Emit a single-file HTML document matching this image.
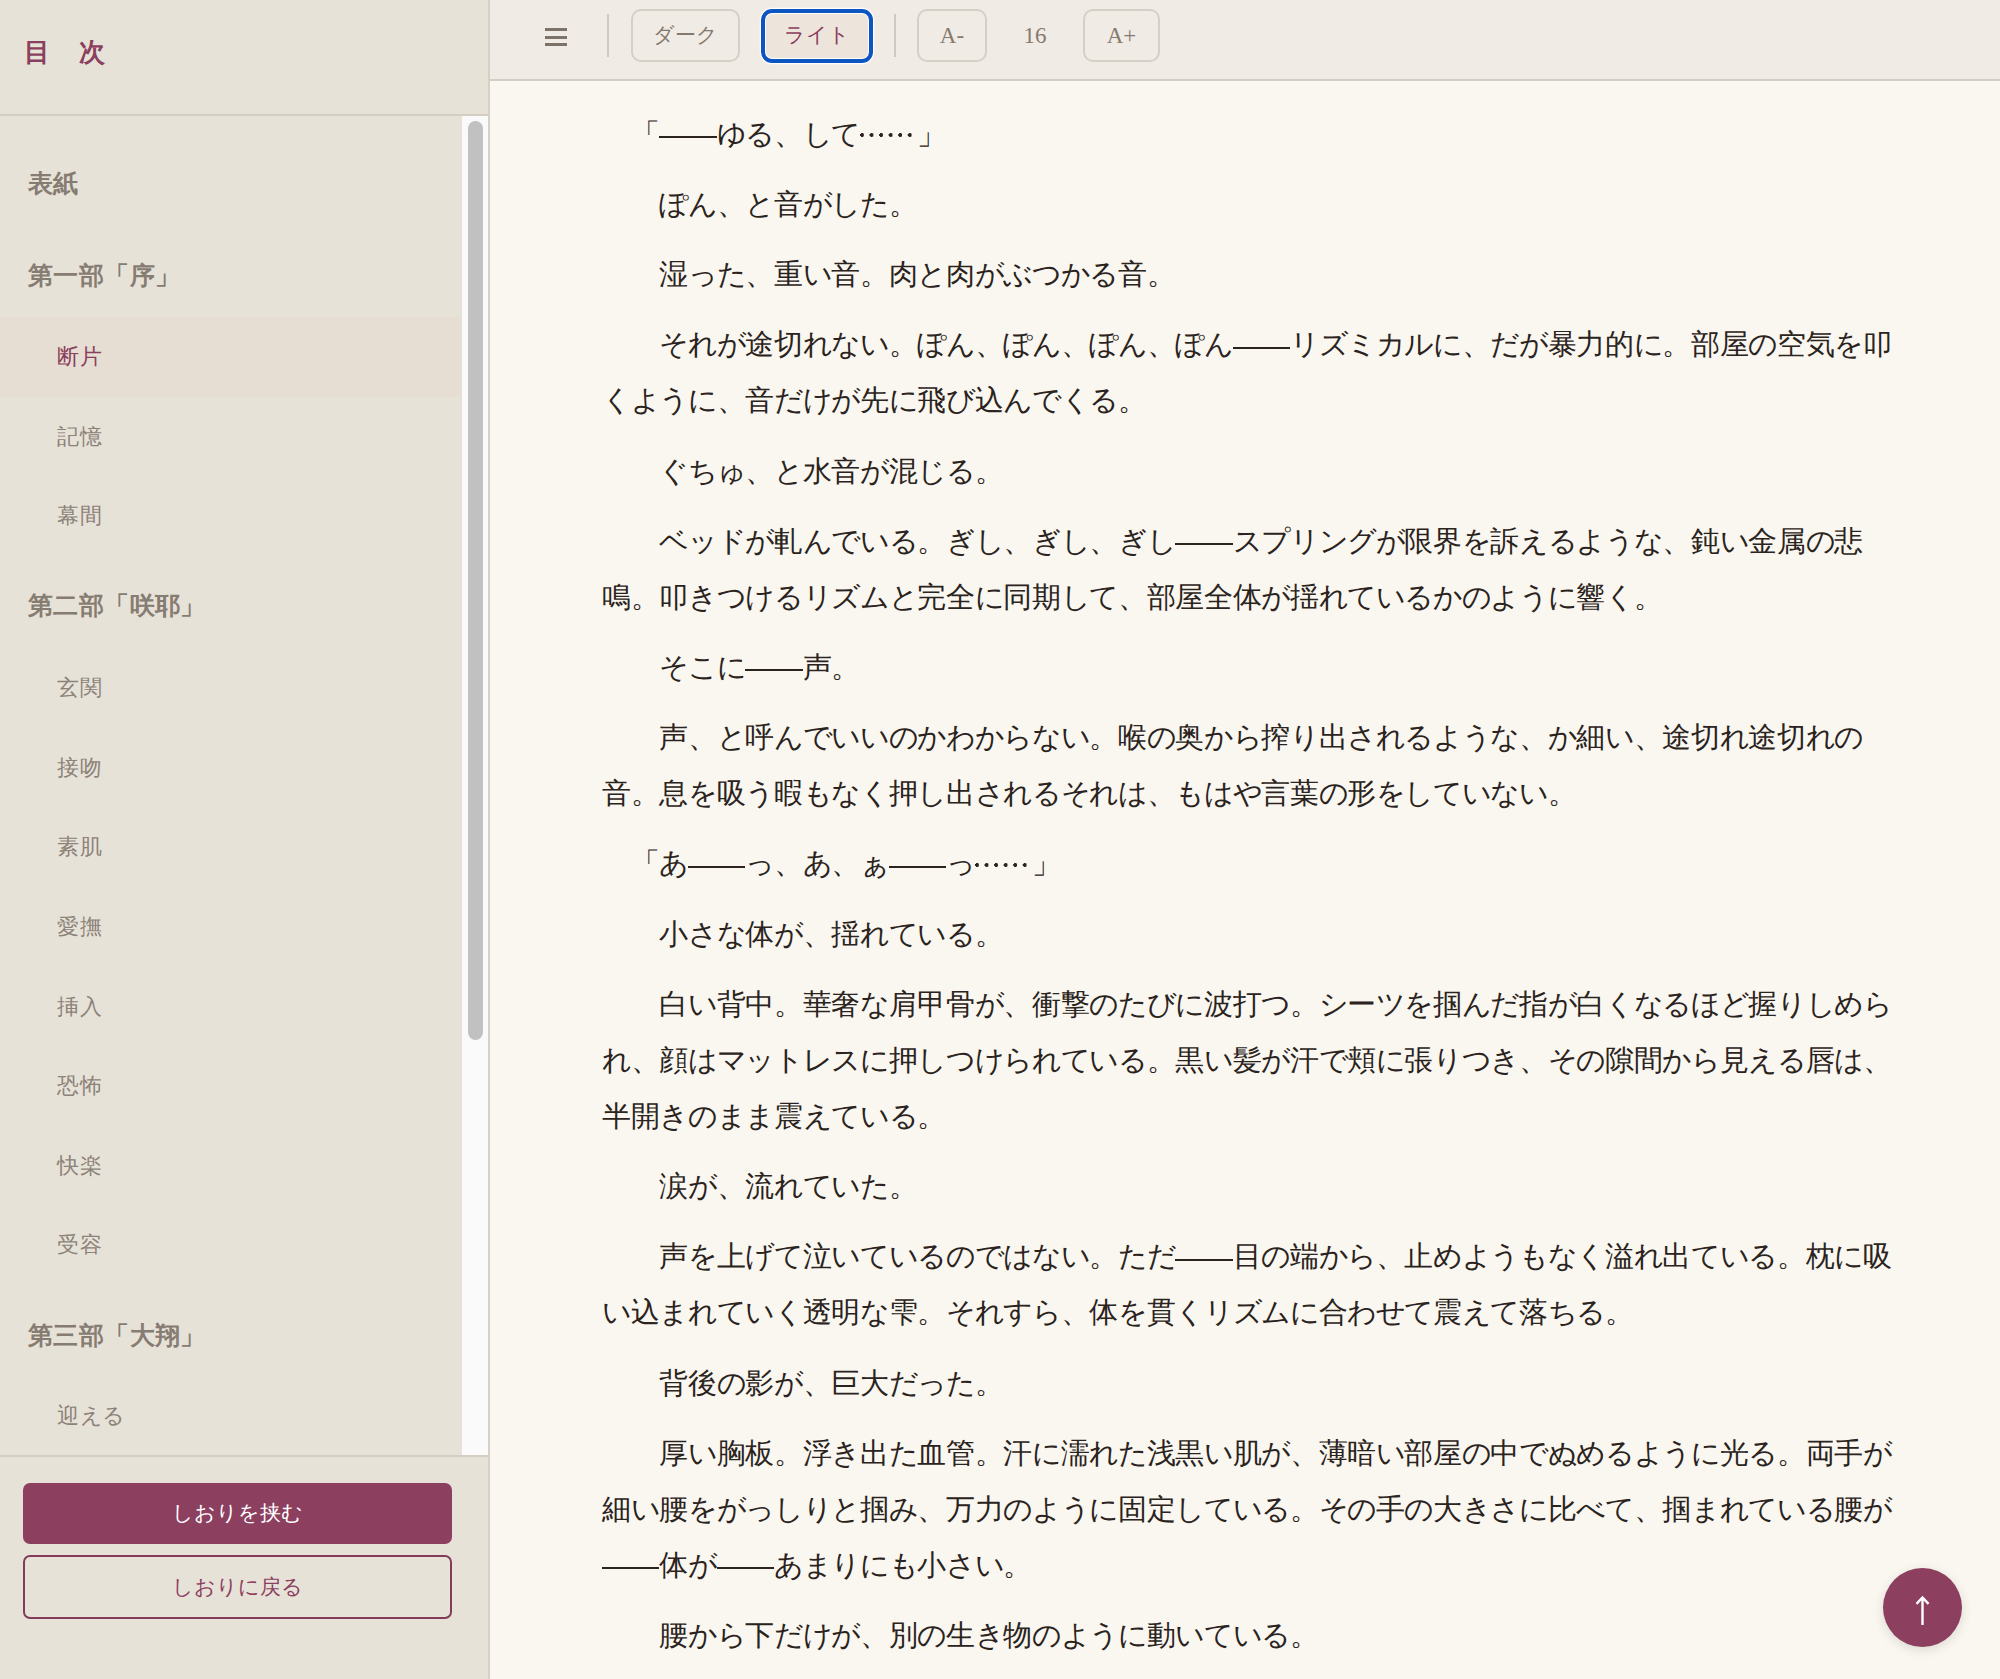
<!DOCTYPE html>
<html lang="ja">
<head>
<meta charset="utf-8">
<style>
html,body{margin:0;padding:0;}
body{width:2000px;height:1679px;position:relative;overflow:hidden;background:#faf7f0;font-family:"Liberation Serif",serif;}
i{font-style:normal;position:absolute;top:0;white-space:nowrap;}
b{font-weight:normal;position:absolute;display:block;}
#side{position:absolute;left:0;top:0;width:488px;height:1679px;background:#e7e2d8;}
#sideborder{position:absolute;left:488px;top:0;width:2px;height:1679px;background:#d6d0c5;}
#sidehead{position:absolute;left:0;top:0;width:488px;height:114px;border-bottom:2px solid #d4cdc2;}
#toc-title{position:absolute;left:0;top:0;font-size:26px;line-height:34px;font-weight:bold;color:#8b3f5e;white-space:nowrap;}
#track{position:absolute;left:462px;top:116px;width:26px;height:1339px;background:#fafafa;}
#thumb{position:absolute;left:468px;top:121px;width:15px;height:919px;background:#c1c1c1;border-radius:7.5px;}
.part{position:absolute;left:28px;height:40px;font-size:24.5px;line-height:40px;font-weight:bold;color:#867c72;}
.sub{position:absolute;left:57px;height:40px;font-size:21.7px;line-height:40px;color:#8c8278;}
.sub.active{color:#8b3f5e;}
#activebg{position:absolute;left:0;top:317px;width:462px;height:80px;background:#e6ded2;}
#sidefoot{position:absolute;left:0;top:1455px;width:488px;height:224px;border-top:2px solid #d4cdc2;background:#e7e2d8;}
.btn1{position:absolute;left:23px;top:1483px;width:429px;height:61px;background:#8c3f5f;border-radius:7px;color:#fff;font-size:21px;line-height:61px;text-align:center;}
.btn2{position:absolute;left:23px;top:1555px;width:425px;height:60px;border:2px solid #823c5a;border-radius:7px;color:#8c3f5f;font-size:21px;line-height:60px;text-align:center;}
#toolbar{position:absolute;left:490px;top:0;width:1510px;height:79px;background:#f1ebe6;border-bottom:2px solid #d3cdc2;}
.bar{position:absolute;left:545px;width:22px;height:3px;background:#7d7368;}
.sep{position:absolute;top:14px;width:2px;height:43px;background:#d0c9bf;}
.tbtn{position:absolute;top:9px;height:49px;border:2px solid #d6cfc5;border-radius:10px;box-sizing:content-box;color:#857a6e;font-size:23px;line-height:49px;text-align:center;}
.ln{position:absolute;left:602px;height:56px;width:1300px;color:#2a2320;font-size:28.75px;line-height:56px;}
.ln i{top:-3.30px;}
.d{top:27px;height:2px;background:#2a2320;}
.e{top:0;height:56px;background-image:radial-gradient(circle at 2.1px 26px,#2a2320 1.7px,transparent 2.2px);background-size:9.553px 56px;background-repeat:repeat-x;}
#totop{position:absolute;left:1883px;top:1568px;width:79px;height:79px;border-radius:50%;background:#8c3f5f;box-shadow:0 3px 12px rgba(0,0,0,0.12);}
</style>
</head>
<body>
<div id="side">
  <div id="sidehead"><div id="toc-title"><i style="left:24px;top:36px">目</i><i style="left:79px;top:36px">次</i></div></div>
  <div id="activebg"></div>
<div class="part" style="top:163.80px"><i style="left:0.00px">表</i><i style="left:25.40px">紙</i></div>
<div class="part" style="top:255.60px"><i style="left:0.00px">第</i><i style="left:25.40px">一</i><i style="left:50.80px">部</i><i style="left:76.20px">「</i><i style="left:101.60px">序</i><i style="left:127.00px">」</i></div>
<div class="part" style="top:586.30px"><i style="left:0.00px">第</i><i style="left:25.40px">二</i><i style="left:50.80px">部</i><i style="left:76.20px">「</i><i style="left:101.60px">咲</i><i style="left:127.00px">耶</i><i style="left:152.40px">」</i></div>
<div class="part" style="top:1315.60px"><i style="left:0.00px">第</i><i style="left:25.40px">三</i><i style="left:50.80px">部</i><i style="left:76.20px">「</i><i style="left:101.60px">大</i><i style="left:127.00px">翔</i><i style="left:152.40px">」</i></div>
<div class="sub active" style="top:337.30px"><i style="left:0.00px">断</i><i style="left:22.60px">片</i></div>
<div class="sub" style="top:417.30px"><i style="left:0.00px">記</i><i style="left:22.60px">憶</i></div>
<div class="sub" style="top:495.90px"><i style="left:0.00px">幕</i><i style="left:22.60px">間</i></div>
<div class="sub" style="top:668.30px"><i style="left:0.00px">玄</i><i style="left:22.60px">関</i></div>
<div class="sub" style="top:747.86px"><i style="left:0.00px">接</i><i style="left:22.60px">吻</i></div>
<div class="sub" style="top:827.42px"><i style="left:0.00px">素</i><i style="left:22.60px">肌</i></div>
<div class="sub" style="top:906.98px"><i style="left:0.00px">愛</i><i style="left:22.60px">撫</i></div>
<div class="sub" style="top:986.54px"><i style="left:0.00px">挿</i><i style="left:22.60px">入</i></div>
<div class="sub" style="top:1066.10px"><i style="left:0.00px">恐</i><i style="left:22.60px">怖</i></div>
<div class="sub" style="top:1145.66px"><i style="left:0.00px">快</i><i style="left:22.60px">楽</i></div>
<div class="sub" style="top:1225.22px"><i style="left:0.00px">受</i><i style="left:22.60px">容</i></div>
<div class="sub" style="top:1396.20px"><i style="left:0.00px">迎</i><i style="left:22.60px">え</i><i style="left:45.20px">る</i></div>
  <div id="track"></div>
  <div id="thumb"></div>
  <div id="sidefoot"></div>
  <div class="btn1">しおりを挟む</div>
  <div class="btn2">しおりに戻る</div>
</div>
<div id="sideborder"></div>
<div id="toolbar"></div>
<div class="bar" style="top:28px"></div>
<div class="bar" style="top:36px"></div>
<div class="bar" style="top:43px"></div>
<div class="sep" style="left:607px"></div>
<div class="tbtn" style="left:631px;width:105px;font-size:20.5px">ダーク</div>
<div style="position:absolute;left:761px;top:9px;width:112px;height:54px;box-sizing:border-box;border:4px solid #0d55c0;border-radius:11px;background:#ede5dc;box-shadow:0 0 0 1.2px #fff, inset 0 0 0 1px #fff;color:#8b3f5e;font-size:20.5px;line-height:44px;text-align:center">ライト</div>
<div class="sep" style="left:894px"></div>
<div class="tbtn" style="left:917px;width:66px">A-</div>
<div style="position:absolute;left:1010px;top:9px;width:50px;line-height:53px;text-align:center;font-size:23px;color:#857a6e">16</div>
<div class="tbtn" style="left:1083px;width:73px">A+</div>
<div class="ln" style="top:109.00px"><i style="left:28.66px">「</i><b class="d" style="left:57.32px;width:57.32px"></b><i style="left:114.64px">ゆ</i><i style="left:143.30px">る</i><i style="left:171.96px">、</i><i style="left:200.62px">し</i><i style="left:229.28px">て</i><b class="e" style="left:257.94px;width:57.32px"></b><i style="left:315.26px">」</i></div>
<div class="ln" style="top:179.22px"><i style="left:57.32px">ぽ</i><i style="left:85.98px">ん</i><i style="left:114.64px">、</i><i style="left:143.30px">と</i><i style="left:171.96px">音</i><i style="left:200.62px">が</i><i style="left:229.28px">し</i><i style="left:257.94px">た</i><i style="left:286.60px">。</i></div>
<div class="ln" style="top:249.44px"><i style="left:57.32px">湿</i><i style="left:85.98px">っ</i><i style="left:114.64px">た</i><i style="left:143.30px">、</i><i style="left:171.96px">重</i><i style="left:200.62px">い</i><i style="left:229.28px">音</i><i style="left:257.94px">。</i><i style="left:286.60px">肉</i><i style="left:315.26px">と</i><i style="left:343.92px">肉</i><i style="left:372.58px">が</i><i style="left:401.24px">ぶ</i><i style="left:429.90px">つ</i><i style="left:458.56px">か</i><i style="left:487.22px">る</i><i style="left:515.88px">音</i><i style="left:544.54px">。</i></div>
<div class="ln" style="top:319.66px"><i style="left:57.32px">そ</i><i style="left:85.98px">れ</i><i style="left:114.64px">が</i><i style="left:143.30px">途</i><i style="left:171.96px">切</i><i style="left:200.62px">れ</i><i style="left:229.28px">な</i><i style="left:257.94px">い</i><i style="left:286.60px">。</i><i style="left:315.26px">ぽ</i><i style="left:343.92px">ん</i><i style="left:372.58px">、</i><i style="left:401.24px">ぽ</i><i style="left:429.90px">ん</i><i style="left:458.56px">、</i><i style="left:487.22px">ぽ</i><i style="left:515.88px">ん</i><i style="left:544.54px">、</i><i style="left:573.20px">ぽ</i><i style="left:601.86px">ん</i><b class="d" style="left:630.52px;width:57.32px"></b><i style="left:687.84px">リ</i><i style="left:716.50px">ズ</i><i style="left:745.16px">ミ</i><i style="left:773.82px">カ</i><i style="left:802.48px">ル</i><i style="left:831.14px">に</i><i style="left:859.80px">、</i><i style="left:888.46px">だ</i><i style="left:917.12px">が</i><i style="left:945.78px">暴</i><i style="left:974.44px">力</i><i style="left:1003.10px">的</i><i style="left:1031.76px">に</i><i style="left:1060.42px">。</i><i style="left:1089.08px">部</i><i style="left:1117.74px">屋</i><i style="left:1146.40px">の</i><i style="left:1175.06px">空</i><i style="left:1203.72px">気</i><i style="left:1232.38px">を</i><i style="left:1261.04px">叩</i></div>
<div class="ln" style="top:375.66px"><i style="left:0.00px">く</i><i style="left:28.66px">よ</i><i style="left:57.32px">う</i><i style="left:85.98px">に</i><i style="left:114.64px">、</i><i style="left:143.30px">音</i><i style="left:171.96px">だ</i><i style="left:200.62px">け</i><i style="left:229.28px">が</i><i style="left:257.94px">先</i><i style="left:286.60px">に</i><i style="left:315.26px">飛</i><i style="left:343.92px">び</i><i style="left:372.58px">込</i><i style="left:401.24px">ん</i><i style="left:429.90px">で</i><i style="left:458.56px">く</i><i style="left:487.22px">る</i><i style="left:515.88px">。</i></div>
<div class="ln" style="top:445.88px"><i style="left:57.32px">ぐ</i><i style="left:85.98px">ち</i><i style="left:114.64px">ゅ</i><i style="left:143.30px">、</i><i style="left:171.96px">と</i><i style="left:200.62px">水</i><i style="left:229.28px">音</i><i style="left:257.94px">が</i><i style="left:286.60px">混</i><i style="left:315.26px">じ</i><i style="left:343.92px">る</i><i style="left:372.58px">。</i></div>
<div class="ln" style="top:516.10px"><i style="left:57.32px">ベ</i><i style="left:85.98px">ッ</i><i style="left:114.64px">ド</i><i style="left:143.30px">が</i><i style="left:171.96px">軋</i><i style="left:200.62px">ん</i><i style="left:229.28px">で</i><i style="left:257.94px">い</i><i style="left:286.60px">る</i><i style="left:315.26px">。</i><i style="left:343.92px">ぎ</i><i style="left:372.58px">し</i><i style="left:401.24px">、</i><i style="left:429.90px">ぎ</i><i style="left:458.56px">し</i><i style="left:487.22px">、</i><i style="left:515.88px">ぎ</i><i style="left:544.54px">し</i><b class="d" style="left:573.20px;width:57.32px"></b><i style="left:630.52px">ス</i><i style="left:659.18px">プ</i><i style="left:687.84px">リ</i><i style="left:716.50px">ン</i><i style="left:745.16px">グ</i><i style="left:773.82px">が</i><i style="left:802.48px">限</i><i style="left:831.14px">界</i><i style="left:859.80px">を</i><i style="left:888.46px">訴</i><i style="left:917.12px">え</i><i style="left:945.78px">る</i><i style="left:974.44px">よ</i><i style="left:1003.10px">う</i><i style="left:1031.76px">な</i><i style="left:1060.42px">、</i><i style="left:1089.08px">鈍</i><i style="left:1117.74px">い</i><i style="left:1146.40px">金</i><i style="left:1175.06px">属</i><i style="left:1203.72px">の</i><i style="left:1232.38px">悲</i></div>
<div class="ln" style="top:572.10px"><i style="left:0.00px">鳴</i><i style="left:28.66px">。</i><i style="left:57.32px">叩</i><i style="left:85.98px">き</i><i style="left:114.64px">つ</i><i style="left:143.30px">け</i><i style="left:171.96px">る</i><i style="left:200.62px">リ</i><i style="left:229.28px">ズ</i><i style="left:257.94px">ム</i><i style="left:286.60px">と</i><i style="left:315.26px">完</i><i style="left:343.92px">全</i><i style="left:372.58px">に</i><i style="left:401.24px">同</i><i style="left:429.90px">期</i><i style="left:458.56px">し</i><i style="left:487.22px">て</i><i style="left:515.88px">、</i><i style="left:544.54px">部</i><i style="left:573.20px">屋</i><i style="left:601.86px">全</i><i style="left:630.52px">体</i><i style="left:659.18px">が</i><i style="left:687.84px">揺</i><i style="left:716.50px">れ</i><i style="left:745.16px">て</i><i style="left:773.82px">い</i><i style="left:802.48px">る</i><i style="left:831.14px">か</i><i style="left:859.80px">の</i><i style="left:888.46px">よ</i><i style="left:917.12px">う</i><i style="left:945.78px">に</i><i style="left:974.44px">響</i><i style="left:1003.10px">く</i><i style="left:1031.76px">。</i></div>
<div class="ln" style="top:642.32px"><i style="left:57.32px">そ</i><i style="left:85.98px">こ</i><i style="left:114.64px">に</i><b class="d" style="left:143.30px;width:57.32px"></b><i style="left:200.62px">声</i><i style="left:229.28px">。</i></div>
<div class="ln" style="top:712.54px"><i style="left:57.32px">声</i><i style="left:85.98px">、</i><i style="left:114.64px">と</i><i style="left:143.30px">呼</i><i style="left:171.96px">ん</i><i style="left:200.62px">で</i><i style="left:229.28px">い</i><i style="left:257.94px">い</i><i style="left:286.60px">の</i><i style="left:315.26px">か</i><i style="left:343.92px">わ</i><i style="left:372.58px">か</i><i style="left:401.24px">ら</i><i style="left:429.90px">な</i><i style="left:458.56px">い</i><i style="left:487.22px">。</i><i style="left:515.88px">喉</i><i style="left:544.54px">の</i><i style="left:573.20px">奥</i><i style="left:601.86px">か</i><i style="left:630.52px">ら</i><i style="left:659.18px">搾</i><i style="left:687.84px">り</i><i style="left:716.50px">出</i><i style="left:745.16px">さ</i><i style="left:773.82px">れ</i><i style="left:802.48px">る</i><i style="left:831.14px">よ</i><i style="left:859.80px">う</i><i style="left:888.46px">な</i><i style="left:917.12px">、</i><i style="left:945.78px">か</i><i style="left:974.44px">細</i><i style="left:1003.10px">い</i><i style="left:1031.76px">、</i><i style="left:1060.42px">途</i><i style="left:1089.08px">切</i><i style="left:1117.74px">れ</i><i style="left:1146.40px">途</i><i style="left:1175.06px">切</i><i style="left:1203.72px">れ</i><i style="left:1232.38px">の</i></div>
<div class="ln" style="top:768.54px"><i style="left:0.00px">音</i><i style="left:28.66px">。</i><i style="left:57.32px">息</i><i style="left:85.98px">を</i><i style="left:114.64px">吸</i><i style="left:143.30px">う</i><i style="left:171.96px">暇</i><i style="left:200.62px">も</i><i style="left:229.28px">な</i><i style="left:257.94px">く</i><i style="left:286.60px">押</i><i style="left:315.26px">し</i><i style="left:343.92px">出</i><i style="left:372.58px">さ</i><i style="left:401.24px">れ</i><i style="left:429.90px">る</i><i style="left:458.56px">そ</i><i style="left:487.22px">れ</i><i style="left:515.88px">は</i><i style="left:544.54px">、</i><i style="left:573.20px">も</i><i style="left:601.86px">は</i><i style="left:630.52px">や</i><i style="left:659.18px">言</i><i style="left:687.84px">葉</i><i style="left:716.50px">の</i><i style="left:745.16px">形</i><i style="left:773.82px">を</i><i style="left:802.48px">し</i><i style="left:831.14px">て</i><i style="left:859.80px">い</i><i style="left:888.46px">な</i><i style="left:917.12px">い</i><i style="left:945.78px">。</i></div>
<div class="ln" style="top:838.76px"><i style="left:28.66px">「</i><i style="left:57.32px">あ</i><b class="d" style="left:85.98px;width:57.32px"></b><i style="left:143.30px">っ</i><i style="left:171.96px">、</i><i style="left:200.62px">あ</i><i style="left:229.28px">、</i><i style="left:257.94px">ぁ</i><b class="d" style="left:286.60px;width:57.32px"></b><i style="left:343.92px">っ</i><b class="e" style="left:372.58px;width:57.32px"></b><i style="left:429.90px">」</i></div>
<div class="ln" style="top:908.98px"><i style="left:57.32px">小</i><i style="left:85.98px">さ</i><i style="left:114.64px">な</i><i style="left:143.30px">体</i><i style="left:171.96px">が</i><i style="left:200.62px">、</i><i style="left:229.28px">揺</i><i style="left:257.94px">れ</i><i style="left:286.60px">て</i><i style="left:315.26px">い</i><i style="left:343.92px">る</i><i style="left:372.58px">。</i></div>
<div class="ln" style="top:979.20px"><i style="left:57.32px">白</i><i style="left:85.98px">い</i><i style="left:114.64px">背</i><i style="left:143.30px">中</i><i style="left:171.96px">。</i><i style="left:200.62px">華</i><i style="left:229.28px">奢</i><i style="left:257.94px">な</i><i style="left:286.60px">肩</i><i style="left:315.26px">甲</i><i style="left:343.92px">骨</i><i style="left:372.58px">が</i><i style="left:401.24px">、</i><i style="left:429.90px">衝</i><i style="left:458.56px">撃</i><i style="left:487.22px">の</i><i style="left:515.88px">た</i><i style="left:544.54px">び</i><i style="left:573.20px">に</i><i style="left:601.86px">波</i><i style="left:630.52px">打</i><i style="left:659.18px">つ</i><i style="left:687.84px">。</i><i style="left:716.50px">シ</i><i style="left:745.16px">ー</i><i style="left:773.82px">ツ</i><i style="left:802.48px">を</i><i style="left:831.14px">掴</i><i style="left:859.80px">ん</i><i style="left:888.46px">だ</i><i style="left:917.12px">指</i><i style="left:945.78px">が</i><i style="left:974.44px">白</i><i style="left:1003.10px">く</i><i style="left:1031.76px">な</i><i style="left:1060.42px">る</i><i style="left:1089.08px">ほ</i><i style="left:1117.74px">ど</i><i style="left:1146.40px">握</i><i style="left:1175.06px">り</i><i style="left:1203.72px">し</i><i style="left:1232.38px">め</i><i style="left:1261.04px">ら</i></div>
<div class="ln" style="top:1035.20px"><i style="left:0.00px">れ</i><i style="left:28.66px">、</i><i style="left:57.32px">顔</i><i style="left:85.98px">は</i><i style="left:114.64px">マ</i><i style="left:143.30px">ッ</i><i style="left:171.96px">ト</i><i style="left:200.62px">レ</i><i style="left:229.28px">ス</i><i style="left:257.94px">に</i><i style="left:286.60px">押</i><i style="left:315.26px">し</i><i style="left:343.92px">つ</i><i style="left:372.58px">け</i><i style="left:401.24px">ら</i><i style="left:429.90px">れ</i><i style="left:458.56px">て</i><i style="left:487.22px">い</i><i style="left:515.88px">る</i><i style="left:544.54px">。</i><i style="left:573.20px">黒</i><i style="left:601.86px">い</i><i style="left:630.52px">髪</i><i style="left:659.18px">が</i><i style="left:687.84px">汗</i><i style="left:716.50px">で</i><i style="left:745.16px">頬</i><i style="left:773.82px">に</i><i style="left:802.48px">張</i><i style="left:831.14px">り</i><i style="left:859.80px">つ</i><i style="left:888.46px">き</i><i style="left:917.12px">、</i><i style="left:945.78px">そ</i><i style="left:974.44px">の</i><i style="left:1003.10px">隙</i><i style="left:1031.76px">間</i><i style="left:1060.42px">か</i><i style="left:1089.08px">ら</i><i style="left:1117.74px">見</i><i style="left:1146.40px">え</i><i style="left:1175.06px">る</i><i style="left:1203.72px">唇</i><i style="left:1232.38px">は</i><i style="left:1261.04px">、</i></div>
<div class="ln" style="top:1091.20px"><i style="left:0.00px">半</i><i style="left:28.66px">開</i><i style="left:57.32px">き</i><i style="left:85.98px">の</i><i style="left:114.64px">ま</i><i style="left:143.30px">ま</i><i style="left:171.96px">震</i><i style="left:200.62px">え</i><i style="left:229.28px">て</i><i style="left:257.94px">い</i><i style="left:286.60px">る</i><i style="left:315.26px">。</i></div>
<div class="ln" style="top:1161.42px"><i style="left:57.32px">涙</i><i style="left:85.98px">が</i><i style="left:114.64px">、</i><i style="left:143.30px">流</i><i style="left:171.96px">れ</i><i style="left:200.62px">て</i><i style="left:229.28px">い</i><i style="left:257.94px">た</i><i style="left:286.60px">。</i></div>
<div class="ln" style="top:1231.64px"><i style="left:57.32px">声</i><i style="left:85.98px">を</i><i style="left:114.64px">上</i><i style="left:143.30px">げ</i><i style="left:171.96px">て</i><i style="left:200.62px">泣</i><i style="left:229.28px">い</i><i style="left:257.94px">て</i><i style="left:286.60px">い</i><i style="left:315.26px">る</i><i style="left:343.92px">の</i><i style="left:372.58px">で</i><i style="left:401.24px">は</i><i style="left:429.90px">な</i><i style="left:458.56px">い</i><i style="left:487.22px">。</i><i style="left:515.88px">た</i><i style="left:544.54px">だ</i><b class="d" style="left:573.20px;width:57.32px"></b><i style="left:630.52px">目</i><i style="left:659.18px">の</i><i style="left:687.84px">端</i><i style="left:716.50px">か</i><i style="left:745.16px">ら</i><i style="left:773.82px">、</i><i style="left:802.48px">止</i><i style="left:831.14px">め</i><i style="left:859.80px">よ</i><i style="left:888.46px">う</i><i style="left:917.12px">も</i><i style="left:945.78px">な</i><i style="left:974.44px">く</i><i style="left:1003.10px">溢</i><i style="left:1031.76px">れ</i><i style="left:1060.42px">出</i><i style="left:1089.08px">て</i><i style="left:1117.74px">い</i><i style="left:1146.40px">る</i><i style="left:1175.06px">。</i><i style="left:1203.72px">枕</i><i style="left:1232.38px">に</i><i style="left:1261.04px">吸</i></div>
<div class="ln" style="top:1287.64px"><i style="left:0.00px">い</i><i style="left:28.66px">込</i><i style="left:57.32px">ま</i><i style="left:85.98px">れ</i><i style="left:114.64px">て</i><i style="left:143.30px">い</i><i style="left:171.96px">く</i><i style="left:200.62px">透</i><i style="left:229.28px">明</i><i style="left:257.94px">な</i><i style="left:286.60px">雫</i><i style="left:315.26px">。</i><i style="left:343.92px">そ</i><i style="left:372.58px">れ</i><i style="left:401.24px">す</i><i style="left:429.90px">ら</i><i style="left:458.56px">、</i><i style="left:487.22px">体</i><i style="left:515.88px">を</i><i style="left:544.54px">貫</i><i style="left:573.20px">く</i><i style="left:601.86px">リ</i><i style="left:630.52px">ズ</i><i style="left:659.18px">ム</i><i style="left:687.84px">に</i><i style="left:716.50px">合</i><i style="left:745.16px">わ</i><i style="left:773.82px">せ</i><i style="left:802.48px">て</i><i style="left:831.14px">震</i><i style="left:859.80px">え</i><i style="left:888.46px">て</i><i style="left:917.12px">落</i><i style="left:945.78px">ち</i><i style="left:974.44px">る</i><i style="left:1003.10px">。</i></div>
<div class="ln" style="top:1357.86px"><i style="left:57.32px">背</i><i style="left:85.98px">後</i><i style="left:114.64px">の</i><i style="left:143.30px">影</i><i style="left:171.96px">が</i><i style="left:200.62px">、</i><i style="left:229.28px">巨</i><i style="left:257.94px">大</i><i style="left:286.60px">だ</i><i style="left:315.26px">っ</i><i style="left:343.92px">た</i><i style="left:372.58px">。</i></div>
<div class="ln" style="top:1428.08px"><i style="left:57.32px">厚</i><i style="left:85.98px">い</i><i style="left:114.64px">胸</i><i style="left:143.30px">板</i><i style="left:171.96px">。</i><i style="left:200.62px">浮</i><i style="left:229.28px">き</i><i style="left:257.94px">出</i><i style="left:286.60px">た</i><i style="left:315.26px">血</i><i style="left:343.92px">管</i><i style="left:372.58px">。</i><i style="left:401.24px">汗</i><i style="left:429.90px">に</i><i style="left:458.56px">濡</i><i style="left:487.22px">れ</i><i style="left:515.88px">た</i><i style="left:544.54px">浅</i><i style="left:573.20px">黒</i><i style="left:601.86px">い</i><i style="left:630.52px">肌</i><i style="left:659.18px">が</i><i style="left:687.84px">、</i><i style="left:716.50px">薄</i><i style="left:745.16px">暗</i><i style="left:773.82px">い</i><i style="left:802.48px">部</i><i style="left:831.14px">屋</i><i style="left:859.80px">の</i><i style="left:888.46px">中</i><i style="left:917.12px">で</i><i style="left:945.78px">ぬ</i><i style="left:974.44px">め</i><i style="left:1003.10px">る</i><i style="left:1031.76px">よ</i><i style="left:1060.42px">う</i><i style="left:1089.08px">に</i><i style="left:1117.74px">光</i><i style="left:1146.40px">る</i><i style="left:1175.06px">。</i><i style="left:1203.72px">両</i><i style="left:1232.38px">手</i><i style="left:1261.04px">が</i></div>
<div class="ln" style="top:1484.08px"><i style="left:0.00px">細</i><i style="left:28.66px">い</i><i style="left:57.32px">腰</i><i style="left:85.98px">を</i><i style="left:114.64px">が</i><i style="left:143.30px">っ</i><i style="left:171.96px">し</i><i style="left:200.62px">り</i><i style="left:229.28px">と</i><i style="left:257.94px">掴</i><i style="left:286.60px">み</i><i style="left:315.26px">、</i><i style="left:343.92px">万</i><i style="left:372.58px">力</i><i style="left:401.24px">の</i><i style="left:429.90px">よ</i><i style="left:458.56px">う</i><i style="left:487.22px">に</i><i style="left:515.88px">固</i><i style="left:544.54px">定</i><i style="left:573.20px">し</i><i style="left:601.86px">て</i><i style="left:630.52px">い</i><i style="left:659.18px">る</i><i style="left:687.84px">。</i><i style="left:716.50px">そ</i><i style="left:745.16px">の</i><i style="left:773.82px">手</i><i style="left:802.48px">の</i><i style="left:831.14px">大</i><i style="left:859.80px">き</i><i style="left:888.46px">さ</i><i style="left:917.12px">に</i><i style="left:945.78px">比</i><i style="left:974.44px">べ</i><i style="left:1003.10px">て</i><i style="left:1031.76px">、</i><i style="left:1060.42px">掴</i><i style="left:1089.08px">ま</i><i style="left:1117.74px">れ</i><i style="left:1146.40px">て</i><i style="left:1175.06px">い</i><i style="left:1203.72px">る</i><i style="left:1232.38px">腰</i><i style="left:1261.04px">が</i></div>
<div class="ln" style="top:1540.08px"><b class="d" style="left:0.00px;width:57.32px"></b><i style="left:57.32px">体</i><i style="left:85.98px">が</i><b class="d" style="left:114.64px;width:57.32px"></b><i style="left:171.96px">あ</i><i style="left:200.62px">ま</i><i style="left:229.28px">り</i><i style="left:257.94px">に</i><i style="left:286.60px">も</i><i style="left:315.26px">小</i><i style="left:343.92px">さ</i><i style="left:372.58px">い</i><i style="left:401.24px">。</i></div>
<div class="ln" style="top:1610.30px"><i style="left:57.32px">腰</i><i style="left:85.98px">か</i><i style="left:114.64px">ら</i><i style="left:143.30px">下</i><i style="left:171.96px">だ</i><i style="left:200.62px">け</i><i style="left:229.28px">が</i><i style="left:257.94px">、</i><i style="left:286.60px">別</i><i style="left:315.26px">の</i><i style="left:343.92px">生</i><i style="left:372.58px">き</i><i style="left:401.24px">物</i><i style="left:429.90px">の</i><i style="left:458.56px">よ</i><i style="left:487.22px">う</i><i style="left:515.88px">に</i><i style="left:544.54px">動</i><i style="left:573.20px">い</i><i style="left:601.86px">て</i><i style="left:630.52px">い</i><i style="left:659.18px">る</i><i style="left:687.84px">。</i></div>
<div id="totop"><svg width="79" height="79" viewBox="0 0 79 79" style="position:absolute;left:0;top:0"><path d="M39.5 29.5 V57 M33.5 35.8 L39.5 29.5 L45.5 35.8" stroke="#fff" stroke-width="2.4" fill="none"/></svg></div>
</body>
</html>
